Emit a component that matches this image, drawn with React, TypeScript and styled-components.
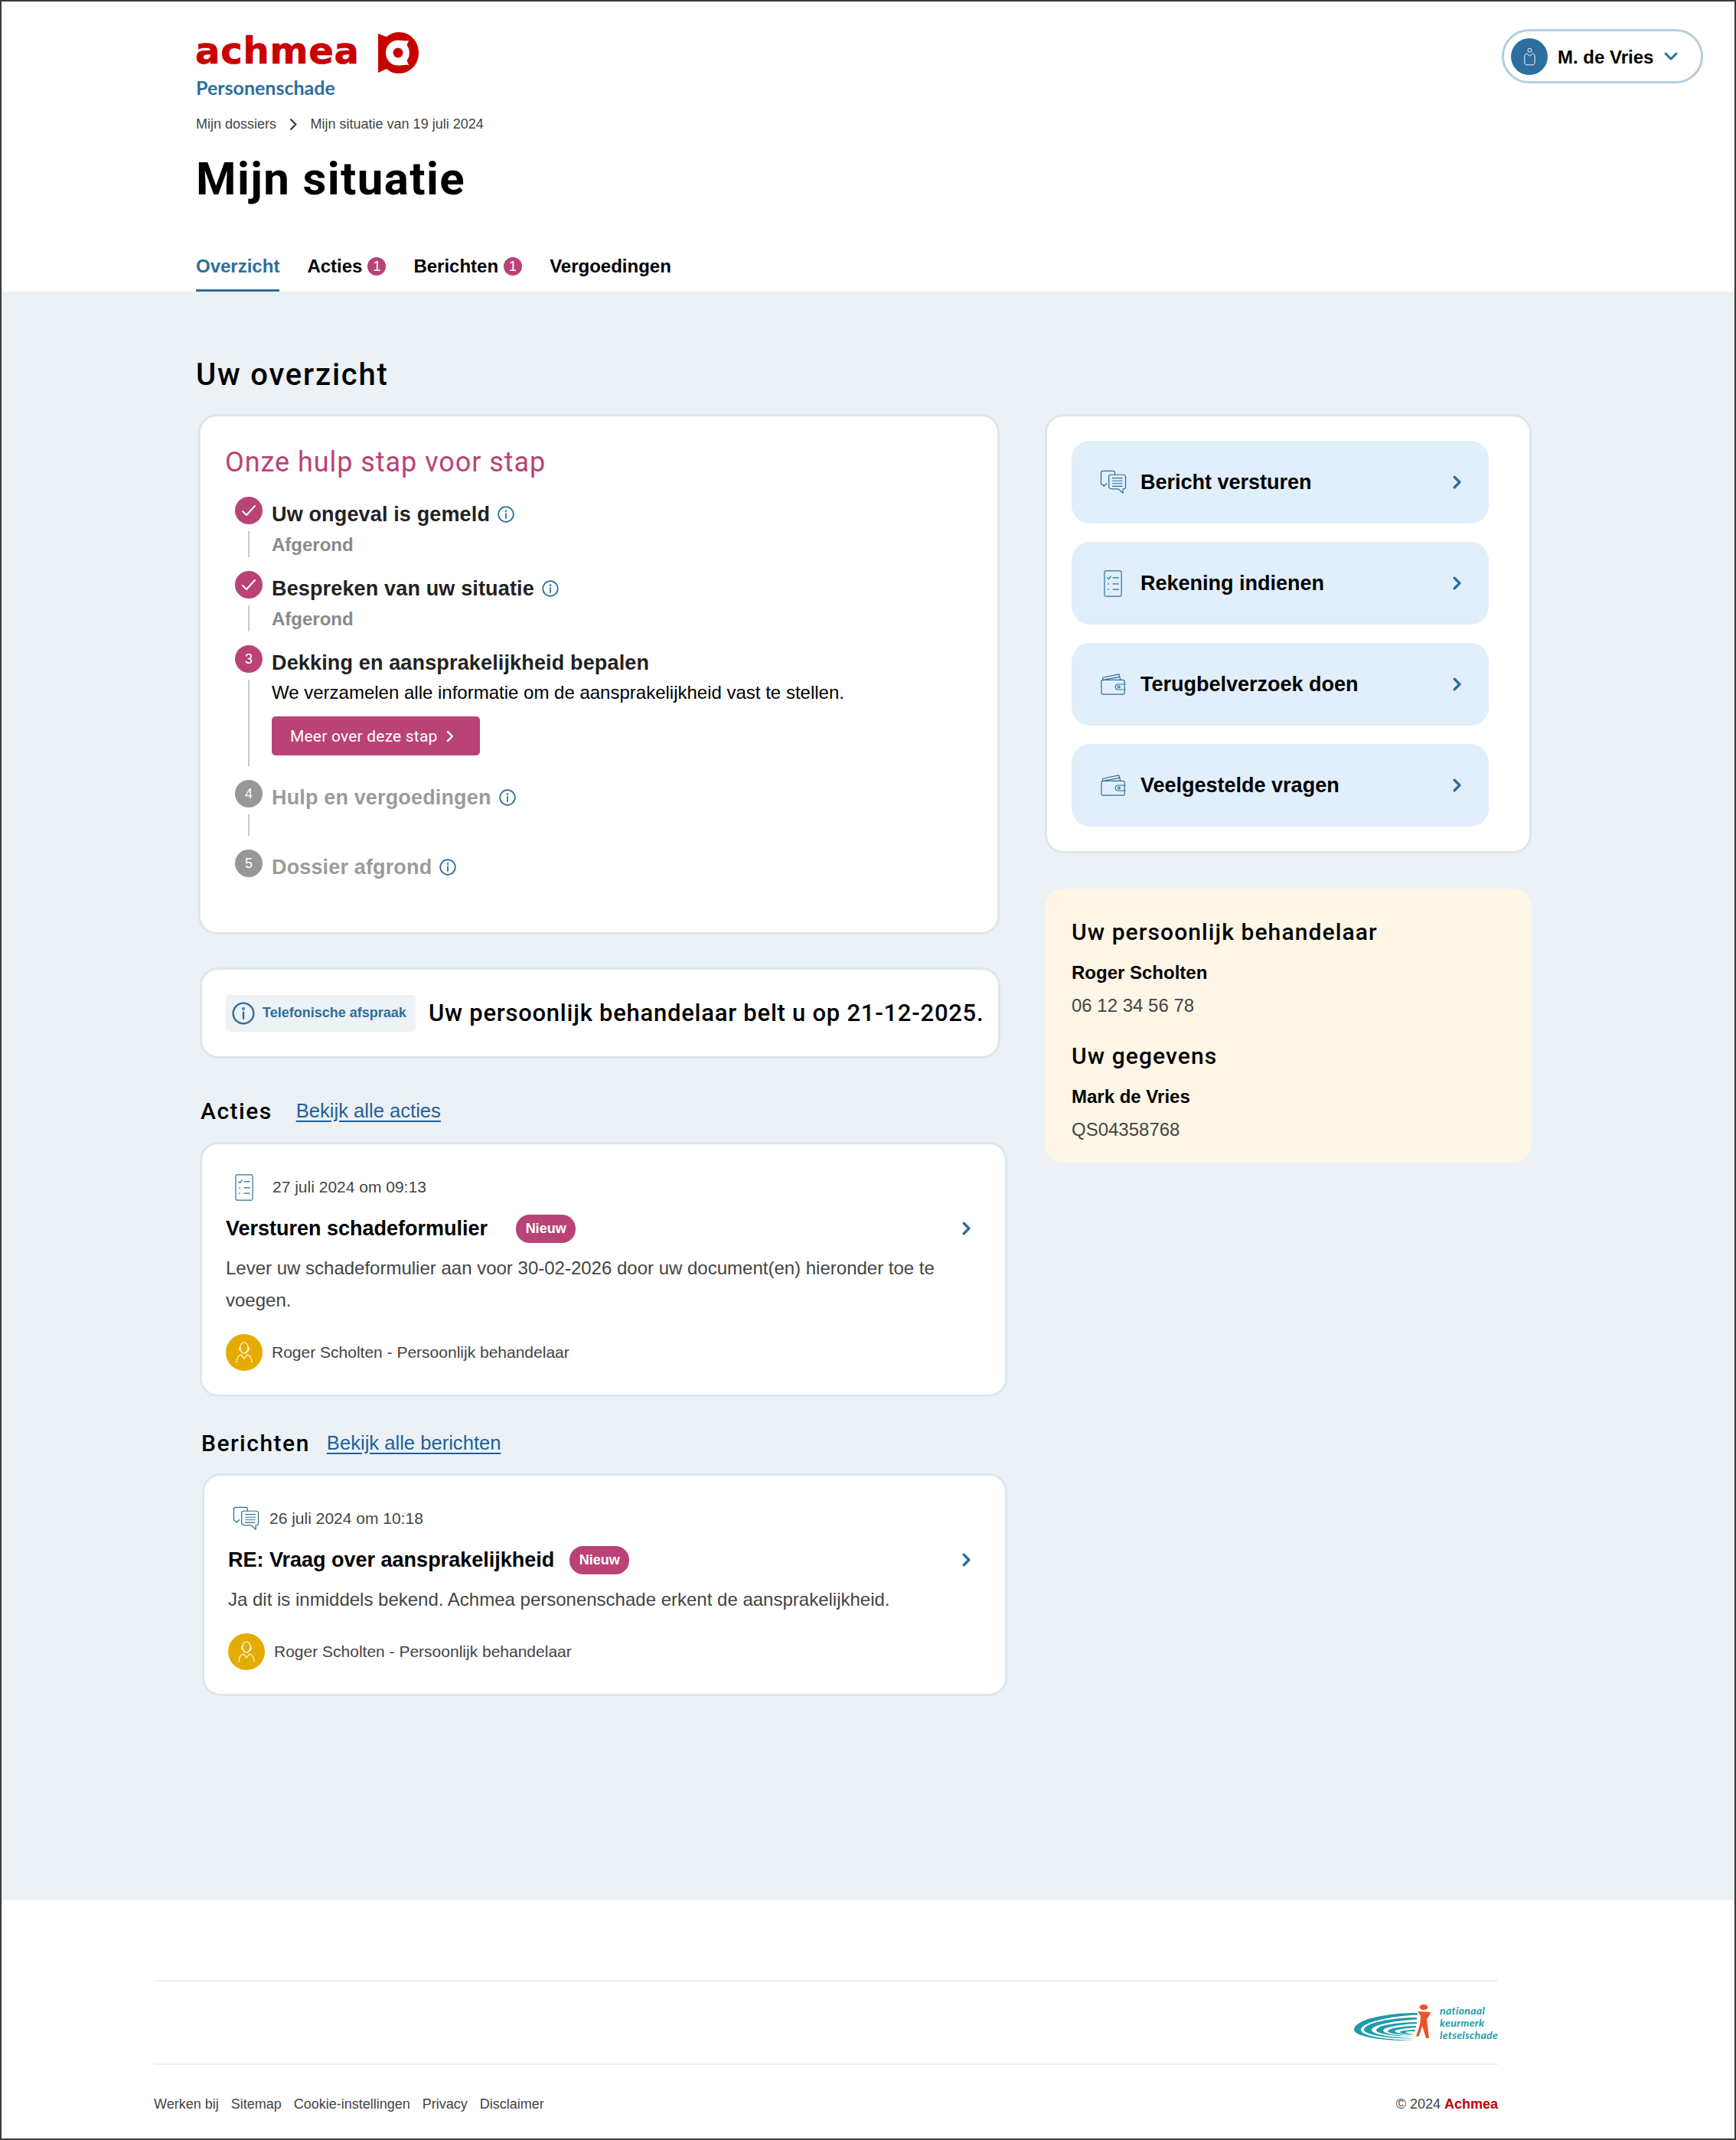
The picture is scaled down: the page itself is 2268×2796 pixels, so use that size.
import * as React from 'react';
import styled, { createGlobalStyle } from 'styled-components';

const PRIMARY = '#2d6f9c';
const PINK = '#b94375';
const SANS = '"Liberation Sans", Arial, sans-serif';
const DISPLAY = 'Roboto, "Noto Sans", sans-serif';

const GlobalStyle = createGlobalStyle`
	html, body {
		margin: 0;
		padding: 0;
		background: #fff;
	}
	body {
		font-family: ${SANS};
		color: #000;
	}
`;

const Page = styled.div`
	position: relative;
	width: 2268px;
	height: 2796px;
	overflow: hidden;
	background: #fff;

	// Dark frame that lies over the page edge in the screenshot
	&::after {
		content: '';
		position: absolute;
		inset: 0;
		border: 2px solid #3a3a3a;
		pointer-events: none;
	}
`;

const Header = styled.header`
	display: flex;
	justify-content: space-between;
	height: 381px;
	padding: 0 43px 0 256px;
	box-sizing: border-box;
`;

const HeaderLeft = styled.div`
	display: flex;
	flex-direction: column;
`;

const LogoRow = styled.div`
	display: flex;
	align-items: center;
	gap: 24px;
	height: 54px;
	margin-top: 42px;
`;

const LogoWord = styled.span`
	font-family: "DejaVu Sans", sans-serif;
	font-weight: 700;
	font-size: 48px;
	line-height: 48px;
	letter-spacing: 0.8px;
	color: #c80000;
	-webkit-text-stroke: 0.7px #c80000;
	margin: -6px 0 0 -1px;
`;

const SubBrand = styled.div`
	font-family: Lato, sans-serif;
	font-weight: 700;
	font-size: 25px;
	line-height: 30px;
	color: ${PRIMARY};
	margin-top: 3px;
`;

const Breadcrumbs = styled.nav`
	display: flex;
	align-items: center;
	gap: 17px;
	height: 24px;
	margin-top: 22px;
	font-size: 18px;
	color: #444;
`;

const PageTitle = styled.h1`
	margin: 25px 0 0;
	font-family: ${DISPLAY};
	font-weight: 700;
	font-size: 60px;
	line-height: 70px;
	letter-spacing: 1.4px;
	color: #000;
`;

const Tabs = styled.div`
	display: flex;
	gap: 36px;
	margin-top: 56px;
`;

const Tab = styled.div<{ $active?: boolean }>`
	position: relative;
	z-index: 1;
	display: flex;
	align-items: center;
	gap: 7px;
	height: 52px;
	padding-bottom: 4px;
	box-sizing: content-box;
	font-size: 24px;
	font-weight: 700;
	color: ${(p) => (p.$active ? PRIMARY : '#000')};
	border-bottom: 3px solid ${(p) => (p.$active ? PRIMARY : 'transparent')};
	margin-top: -3px;
`;

const TabBadge = styled.span`
	display: flex;
	align-items: center;
	justify-content: center;
	width: 24px;
	height: 24px;
	border-radius: 50%;
	background: ${PINK};
	color: #fff;
	font-size: 18px;
	font-weight: 400;
`;

const UserPill = styled.div`
	display: flex;
	align-items: center;
	width: 263px;
	height: 71px;
	box-sizing: border-box;
	margin-top: 38px;
	padding: 0 30px 0 9px;
	border: 3px solid #b5cedd;
	border-radius: 36px;
	font-size: 24px;
	font-weight: 700;
`;

const UserAvatar = styled.span`
	display: flex;
	align-items: center;
	justify-content: center;
	flex: none;
	width: 48px;
	height: 48px;
	border-radius: 50%;
	background: ${PRIMARY};
	margin-right: 13px;
`;

const UserName = styled.span`
	flex: 1;
	padding-top: 2px;
	white-space: nowrap;
`;

const Main = styled.main`
	height: 2101px;
	box-sizing: border-box;
	padding: 87px 0 0 256px;
	background: #ebf1f5;
`;

const SectionTitle = styled.h2`
	margin: 0 0 29px;
	font-family: ${DISPLAY};
	font-weight: 500;
	font-size: 40px;
	line-height: 44px;
	letter-spacing: 1.8px;
	color: #000;
`;

const Columns = styled.div`
	display: flex;
	align-items: flex-start;
	gap: 50px;
`;

const LeftColumn = styled.div`
	display: flex;
	flex-direction: column;
	width: 1059px;
`;

const RightColumn = styled.div`
	display: flex;
	flex-direction: column;
	gap: 46px;
	width: 636px;
`;

const Card = styled.section<{ $ml?: number; $width?: number }>`
	box-sizing: border-box;
	width: ${(p) => (p.$width ? `${p.$width}px` : '100%')};
	margin-left: ${(p) => p.$ml ?? 0}px;
	background: #fff;
	border: 3px solid #dbe7ef;
	border-radius: 24px;
`;

const StepsCard = styled(Card)`
	padding: 38px 30px 50px 32px;
`;

const StepsTitle = styled.h3`
	margin: 0 0 23px;
	font-family: ${DISPLAY};
	font-weight: 400;
	font-size: 36px;
	line-height: 44px;
	letter-spacing: 0.95px;
	color: ${PINK};
`;

const Step = styled.div`
	display: flex;
	gap: 12px;
	margin: 0 0 18px 13px;
`;

const Rail = styled.div`
	display: flex;
	flex-direction: column;
	align-items: center;
	flex: none;
	width: 36px;
`;

const StepCircle = styled.span<{ $muted?: boolean }>`
	display: flex;
	align-items: center;
	justify-content: center;
	width: 36px;
	height: 36px;
	border-radius: 50%;
	background: ${(p) => (p.$muted ? '#979797' : PINK)};
	color: #fff;
	font-size: 18px;
`;

const RailLine = styled.span<{ $height: number }>`
	width: 2px;
	height: ${(p) => p.$height}px;
	margin-top: 9px;
	background: #c9c9c9;
`;

const StepBody = styled.div`
	padding-top: 6px;
`;

const StepHeading = styled.div<{ $muted?: boolean }>`
	display: flex;
	align-items: center;
	gap: 10px;
	font-size: 27px;
	font-weight: 700;
	line-height: 34px;
	letter-spacing: 0.15px;
	color: ${(p) => (p.$muted ? '#9b9b9b' : '#222')};
`;

const StepStatus = styled.div`
	margin-top: 8px;
	font-size: 24px;
	font-weight: 700;
	line-height: 30px;
	color: #8a8a8a;
`;

const StepText = styled.div`
	margin-top: 7px;
	font-size: 24px;
	line-height: 30px;
	color: #000;
`;

const PinkButton = styled.button`
	display: flex;
	align-items: center;
	gap: 11px;
	width: 272px;
	height: 51px;
	margin-top: 16px;
	padding: 0 0 0 24px;
	box-sizing: border-box;
	border: 0;
	border-radius: 5px;
	background: ${PINK};
	color: #fff;
	font-family: Roboto, sans-serif;
	font-size: 21px;
	letter-spacing: 0.2px;
`;

const AppointmentCard = styled(Card)`
	display: flex;
	align-items: center;
	gap: 17px;
	height: 119px;
	margin-top: 43px;
	padding-left: 31px;
`;

const AppointmentChip = styled.div`
	display: flex;
	align-items: center;
	gap: 10px;
	flex: none;
	width: 248px;
	height: 48px;
	box-sizing: border-box;
	padding-left: 8px;
	border-radius: 5px;
	background: #ecf2f6;
	color: ${PRIMARY};
	font-size: 18px;
	font-weight: 700;
	white-space: nowrap;
`;

const AppointmentText = styled.div`
	font-family: ${DISPLAY};
	font-weight: 500;
	font-size: 31px;
	letter-spacing: 0.75px;
	white-space: nowrap;
`;

const ListHeader = styled.div<{ $ml: number; $gap: number; $mt: number; $mb: number }>`
	display: flex;
	align-items: center;
	gap: ${(p) => p.$gap}px;
	height: 40px;
	margin: ${(p) => p.$mt}px 0 ${(p) => p.$mb}px ${(p) => p.$ml}px;
`;

const ListTitle = styled.h3`
	margin: 0;
	font-family: ${DISPLAY};
	font-weight: 500;
	font-size: 30px;
	letter-spacing: 1.5px;
`;

const ListLink = styled.a`
	font-size: 25.6px;
	color: #1f5f9c;
	text-decoration: underline;
	text-underline-offset: 4px;
`;

const FeedCard = styled(Card)`
	padding: 35px 45px 31px 31px;
`;

const FeedMeta = styled.div<{ $iconLeft: number; $gap: number }>`
	display: flex;
	align-items: center;
	gap: ${(p) => p.$gap}px;
	height: 42px;
	padding-left: ${(p) => p.$iconLeft}px;
	font-size: 21px;
	color: #444;
`;

const FeedTitleRow = styled.div`
	display: flex;
	align-items: center;
	height: 40px;
	margin-top: 13px;
`;

const FeedTitle = styled.div<{ $gap: number }>`
	margin-right: ${(p) => p.$gap}px;
	font-size: 27px;
	font-weight: 700;
`;

const NewBadge = styled.span`
	display: flex;
	align-items: center;
	justify-content: center;
	width: 78px;
	height: 37px;
	border-radius: 18px;
	background: ${PINK};
	color: #fff;
	font-size: 18px;
	font-weight: 700;
`;

const FeedChevron = styled.span`
	display: flex;
	margin-left: auto;
`;

const FeedText = styled.p`
	margin: 11px 0 0;
	font-size: 24px;
	line-height: 42px;
	color: #444;
`;

const FeedAuthor = styled.div`
	display: flex;
	align-items: center;
	gap: 12px;
	margin-top: 23px;
	font-size: 21px;
	color: #444;
`;

const AuthorAvatar = styled.span`
	display: flex;
	align-items: center;
	justify-content: center;
	width: 48px;
	height: 48px;
	border-radius: 50%;
	background: #e5ac00;
`;

const ActionsCard = styled(Card)`
	display: flex;
	flex-direction: column;
	gap: 24px;
	padding: 32px 53px 32px 32px;
`;

const ActionRow = styled.a`
	display: flex;
	align-items: center;
	gap: 18px;
	height: 108px;
	padding: 0 36px 0 36px;
	border-radius: 24px;
	background: #e1eefb;
	font-size: 27px;
	font-weight: 700;
`;

const ActionIcon = styled.span`
	display: flex;
	justify-content: center;
	flex: none;
	width: 36px;
`;

const ActionLabel = styled.span`
	flex: 1;
`;

const ContactCard = styled.section`
	display: flex;
	flex-direction: column;
	box-sizing: border-box;
	height: 358px;
	padding: 36px 35px 0;
	border-radius: 24px;
	background: #fdf6e6;
`;

const ContactTitle = styled.h3<{ $mt?: number }>`
	margin: ${(p) => p.$mt ?? 0}px 0 0;
	font-family: ${DISPLAY};
	font-weight: 500;
	font-size: 30px;
	line-height: 42px;
	letter-spacing: 1.1px;
`;

const ContactName = styled.div`
	margin-top: 16px;
	font-size: 24px;
	font-weight: 700;
	line-height: 32px;
`;

const ContactValue = styled.div`
	margin-top: 11px;
	font-size: 24px;
	line-height: 32px;
	color: #444;
`;

const Footer = styled.footer`
	width: 1756px;
	margin-left: 201px;
	padding-top: 105px;
`;

const FooterLogoRow = styled.div`
	display: flex;
	justify-content: flex-end;
	align-items: center;
	gap: 12px;
	height: 107px;
	border-top: 2px solid #eef0f3;
	border-bottom: 2px solid #eef0f3;
`;

const KeurmerkText = styled.div`
	font-family: Lato, sans-serif;
	font-style: italic;
	font-weight: 700;
	font-size: 14px;
	line-height: 16px;
	letter-spacing: 0.3px;
	color: #1c9bab;
`;

const FooterBottom = styled.div`
	display: flex;
	justify-content: space-between;
	align-items: center;
	height: 24px;
	margin-top: 39px;
	font-size: 18px;
	color: #444;
`;

const FooterLinks = styled.div`
	display: flex;
	gap: 16px;
`;

const Copyright = styled.b`
	color: #c00000;
`;

const AchmeaMark = () => (
	<svg width="53" height="54" viewBox="0 0 53 54">
		<path d="M0 2 L11 6 C16 2 21 0 27 0 C42 0 53 12 53 27 C53 42 42 54 27 54 C21 54 16 52 11 48 L0 53 Z" fill="#c80000" />
		<path d="M26 10.500 C30 10.500 35 12 40 11 L37.500 17 C42 23 42 31 37.500 37 L40 43 C35 42 30 43.500 26 43.500 C16.500 43.500 10 36 10 27 C10 18 16.500 10.500 26 10.500 Z" fill="#fff" />
		<circle cx="26" cy="27" r="6.5" fill="#c80000" />
	</svg>
);

const Chevron = ({ size = 18, color = PRIMARY, width = 3 }: { size?: number; color?: string; width?: number }) => (
	<svg width={size * 0.62} height={size} viewBox="0 0 10 16" fill="none" stroke={color} strokeWidth={width} strokeLinecap="round" strokeLinejoin="round">
		<path d="M2 2 L8 8 L2 14" />
	</svg>
);

const ChevronDown = () => (
	<svg width="18" height="11" viewBox="0 0 18 11" fill="none" stroke={PRIMARY} strokeWidth="3" strokeLinecap="round" strokeLinejoin="round">
		<path d="M2 2 L9 9 L16 2" />
	</svg>
);

const CheckMark = () => (
	<svg width="20" height="16" viewBox="0 0 20 16" fill="none" stroke="#fff" strokeWidth="2" strokeLinecap="round" strokeLinejoin="round">
		<path d="M2 9 L7 14 L18 2" />
	</svg>
);

const InfoIcon = ({ size = 22 }: { size?: number }) => (
	<svg width={size} height={size} viewBox="0 0 22 22" fill="none" stroke={PRIMARY} strokeWidth="1.8" strokeLinecap="round" style={{ flex: 'none' }}>
		<circle cx="11" cy="11" r="9.8" />
		<path d="M11 10 L11 16" />
		<circle cx="11" cy="6.6" r="0.5" />
	</svg>
);

const UserIcon = () => (
	<svg width="15" height="24" viewBox="0 0 18 28" fill="none" stroke="#fff" strokeWidth="1.2">
		<circle cx="9" cy="4" r="3" />
		<path d="M4 9 C1.500 10 1 12 1 14 L1 23 C1 25.500 2.500 27 5 27 L13 27 C15.500 27 17 25.500 17 23 L17 14 C17 12 16.500 10 14 9 L9 13 Z" />
	</svg>
);

const SupportIcon = () => (
	<svg width="24" height="30" viewBox="0 0 24 30" fill="none" stroke="#fff" strokeWidth="1.2" strokeLinecap="round">
		<path d="M7 11 C6 5 9 2 12 2 C15 2 18 5 17 11 C16 14 14 16 12 16 C10 16 8 14 7 11 Z" />
		<path d="M6 8 L6 12 M18 8 L18 12 L13 16" />
		<path d="M2 28 C2 22 5 19 8 18 L12 23 L16 18 C19 19 22 22 22 28" />
	</svg>
);

const ChatIcon = () => (
	<svg width="35" height="32" viewBox="0 0 36 36" preserveAspectRatio="none" fill="none" stroke={PRIMARY} strokeWidth="1.3" strokeLinejoin="round" strokeLinecap="round" style={{ flex: 'none' }}>
		<path d="M20 7 L20 4 C20 2.500 19 1.500 17.500 1.500 L4 1.500 C2.500 1.500 1.500 2.500 1.500 4 L1.500 19 C1.500 21 3 22 5 22 L5 24 L9 20" />
		<path d="M12 9.500 C12 8 13 7 14.500 7 L31 7 C33 7 34.500 8 34.500 10 L34.500 25 C34.500 27 33 28 31 28 L31 34 L25 28 L16 28 C13.500 28 12 26.500 12 24 Z" />
		<path d="M17 12 L30 12 M17 16 L30 16 M17 20 L30 20 M17 24 L30 24" />
	</svg>
);

const ChecklistIcon = () => (
	<svg width="24" height="35" viewBox="0 0 26 39" preserveAspectRatio="none" fill="none" stroke={PRIMARY} strokeWidth="1.3" strokeLinejoin="round" strokeLinecap="round" style={{ flex: 'none' }}>
		<rect x="1" y="1" width="24" height="37" rx="2" />
		<path d="M5 11 L7 13 L10 9 M13 11 L21 11 M6 20 L7 20 M13 20 L21 20 M6 28 L7 28 M13 28 L21 28" />
	</svg>
);

const WalletIcon = () => (
	<svg width="33" height="28" viewBox="0 0 36 32" preserveAspectRatio="none" fill="none" stroke={PRIMARY} strokeWidth="1.3" strokeLinejoin="round" strokeLinecap="round">
		<path d="M3 9 L3 6 L26 1 L28 9" />
		<path d="M6 9 L27 5" />
		<path d="M1 12 C1 10.500 2 9.500 3.500 9.500 L31 9.500 C33 9.500 34 10.500 34 12 L34 29 C34 30 33 31 32 31 L3 31 C2 31 1 30 1 29 Z" />
		<path d="M35 16 L25 16 C22 16 21 18 21 20 C21 22 22 24 25 24 L35 24" />
		<circle cx="26" cy="20" r="1.500" />
	</svg>
);

const KeurmerkMark = () => (
	<svg width="100" height="48" viewBox="0 0 100 48" fill="#1c9bab">
		<path d="M83 11 C40 11 0 20 0 33 C0 42 40 48 80 47 C45 46 9 42 9 33 C9 24 45 15 83 13.500 Z" />
		<path d="M82 17 C50 17 13 24 13 33 C13 40 50 45 80 44.500 C52 43 23 40 23 33 C23 27 52 21 82 19.500 Z" />
		<path d="M82 23 C58 23 29 27 29 34 C29 38 55 42 79 42 C58 41 38 38 38 34 C38 30 58 26 82 25 Z" />
		<path d="M81 28 C66 28 44 31 44 35 C44 38 64 40 79 40 C66 39 53 37 53 35 C53 33 66 31 81 30 Z" />
		<path d="M80 33 C72 33 60 34 60 36 C60 38 72 38.500 79 38.500 C74 38 67 37 67 36 C67 35 74 35 80 35 Z" />
		<ellipse cx="91" cy="3.500" rx="5.500" ry="3.500" fill="#e8542a" />
		<path d="M83 9 L100 10 L98 15 L95 19 L98 44 L94 44 L89 28 L85 41 L81 42 L86 26 L87 15 Z" fill="#e8542a" />
	</svg>
);

const steps = [
	{ title: 'Uw ongeval is gemeld', line: 34 },
	{ title: 'Bespreken van uw situatie', line: 34 },
];

const App = () => {
	return (
		<Page>
			<GlobalStyle />
			<Header>
				<HeaderLeft>
					<LogoRow>
						<LogoWord>achmea</LogoWord>
						<AchmeaMark />
					</LogoRow>
					<SubBrand>Personenschade</SubBrand>
					<Breadcrumbs>
						<span>Mijn dossiers</span>
						<Chevron size={17} color="#444" width={2.2} />
						<span>Mijn situatie van 19 juli 2024</span>
					</Breadcrumbs>
					<PageTitle>Mijn situatie</PageTitle>
					<Tabs>
						<Tab $active>Overzicht</Tab>
						<Tab>Acties<TabBadge>1</TabBadge></Tab>
						<Tab>Berichten<TabBadge>1</TabBadge></Tab>
						<Tab>Vergoedingen</Tab>
					</Tabs>
				</HeaderLeft>
				<UserPill>
					<UserAvatar><UserIcon /></UserAvatar>
					<UserName>M. de Vries</UserName>
					<ChevronDown />
				</UserPill>
			</Header>

			<Main>
				<SectionTitle>Uw overzicht</SectionTitle>
				<Columns>
					<LeftColumn>
						<StepsCard $ml={3} $width={1047}>
							<StepsTitle>Onze hulp stap voor stap</StepsTitle>
							{steps.map((step) => (
								<Step key={step.title}>
									<Rail>
										<StepCircle><CheckMark /></StepCircle>
										<RailLine $height={step.line} />
									</Rail>
									<StepBody>
										<StepHeading>{step.title}<InfoIcon /></StepHeading>
										<StepStatus>Afgerond</StepStatus>
									</StepBody>
								</Step>
							))}
							<Step>
								<Rail>
									<StepCircle>3</StepCircle>
									<RailLine $height={113} />
								</Rail>
								<StepBody>
									<StepHeading>Dekking en aansprakelijkheid bepalen</StepHeading>
									<StepText>We verzamelen alle informatie om de aansprakelijkheid vast te stellen.</StepText>
									<PinkButton>Meer over deze stap <Chevron size={16} color="#fff" width={2.4} /></PinkButton>
								</StepBody>
							</Step>
							<Step>
								<Rail>
									<StepCircle $muted>4</StepCircle>
									<RailLine $height={28} />
								</Rail>
								<StepBody>
									<StepHeading $muted>Hulp en vergoedingen<InfoIcon /></StepHeading>
								</StepBody>
							</Step>
							<Step>
								<Rail>
									<StepCircle $muted>5</StepCircle>
								</Rail>
								<StepBody>
									<StepHeading $muted>Dossier afgrond<InfoIcon /></StepHeading>
								</StepBody>
							</Step>
						</StepsCard>

						<AppointmentCard $ml={5} $width={1046}>
							<AppointmentChip><InfoIcon size={30} />Telefonische afspraak</AppointmentChip>
							<AppointmentText>Uw persoonlijk behandelaar belt u op 21-12-2025.</AppointmentText>
						</AppointmentCard>

						<ListHeader $ml={6} $gap={31} $mt={48} $mb={21}>
							<ListTitle>Acties</ListTitle>
							<ListLink>Bekijk alle acties</ListLink>
						</ListHeader>
						<FeedCard $ml={5} $width={1055}>
							<FeedMeta $iconLeft={12} $gap={25}>
								<ChecklistIcon />
								27 juli 2024 om 09:13
							</FeedMeta>
							<FeedTitleRow>
								<FeedTitle $gap={37}>Versturen schadeformulier</FeedTitle>
								<NewBadge>Nieuw</NewBadge>
								<FeedChevron><Chevron /></FeedChevron>
							</FeedTitleRow>
							<FeedText>Lever uw schadeformulier aan voor 30-02-2026 door uw document(en) hieronder toe te voegen.</FeedText>
							<FeedAuthor>
								<AuthorAvatar><SupportIcon /></AuthorAvatar>
								Roger Scholten - Persoonlijk behandelaar
							</FeedAuthor>
						</FeedCard>

						<ListHeader $ml={7} $gap={22} $mt={40} $mb={20}>
							<ListTitle>Berichten</ListTitle>
							<ListLink>Bekijk alle berichten</ListLink>
						</ListHeader>
						<FeedCard $ml={8} $width={1052}>
							<FeedMeta $iconLeft={6} $gap={13}>
								<ChatIcon />
								26 juli 2024 om 10:18
							</FeedMeta>
							<FeedTitleRow>
								<FeedTitle $gap={20}>RE: Vraag over aansprakelijkheid</FeedTitle>
								<NewBadge>Nieuw</NewBadge>
								<FeedChevron><Chevron /></FeedChevron>
							</FeedTitleRow>
							<FeedText>Ja dit is inmiddels bekend. Achmea personenschade erkent de aansprakelijkheid.</FeedText>
							<FeedAuthor>
								<AuthorAvatar><SupportIcon /></AuthorAvatar>
								Roger Scholten - Persoonlijk behandelaar
							</FeedAuthor>
						</FeedCard>
					</LeftColumn>

					<RightColumn>
						<ActionsCard>
							<ActionRow><ActionIcon><ChatIcon /></ActionIcon><ActionLabel>Bericht versturen</ActionLabel><Chevron /></ActionRow>
							<ActionRow><ActionIcon><ChecklistIcon /></ActionIcon><ActionLabel>Rekening indienen</ActionLabel><Chevron /></ActionRow>
							<ActionRow><ActionIcon><WalletIcon /></ActionIcon><ActionLabel>Terugbelverzoek doen</ActionLabel><Chevron /></ActionRow>
							<ActionRow><ActionIcon><WalletIcon /></ActionIcon><ActionLabel>Veelgestelde vragen</ActionLabel><Chevron /></ActionRow>
						</ActionsCard>
						<ContactCard>
							<ContactTitle>Uw persoonlijk behandelaar</ContactTitle>
							<ContactName>Roger Scholten</ContactName>
							<ContactValue>06 12 34 56 78</ContactValue>
							<ContactTitle $mt={29}>Uw gegevens</ContactTitle>
							<ContactName>Mark de Vries</ContactName>
							<ContactValue>QS04358768</ContactValue>
						</ContactCard>
					</RightColumn>
				</Columns>
			</Main>

			<Footer>
				<FooterLogoRow>
					<KeurmerkMark />
					<KeurmerkText>nationaal<br />keurmerk<br />letselschade</KeurmerkText>
				</FooterLogoRow>
				<FooterBottom>
					<FooterLinks>
						<span>Werken bij</span>
						<span>Sitemap</span>
						<span>Cookie-instellingen</span>
						<span>Privacy</span>
						<span>Disclaimer</span>
					</FooterLinks>
					<span>© 2024 <Copyright>Achmea</Copyright></span>
				</FooterBottom>
			</Footer>
		</Page>
	);
};

export default App;
